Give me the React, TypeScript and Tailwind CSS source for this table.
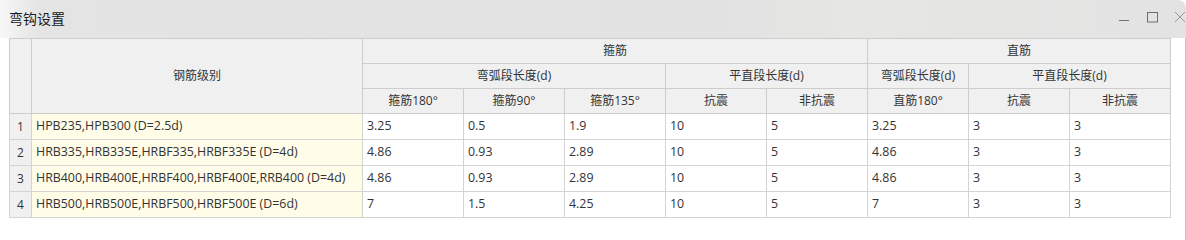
import React from 'react'

interface Row {
  grade: string
  values: string[]
}

const rows: Row[] = [
  { grade: 'HPB235,HPB300 (D=2.5d)', values: ['3.25', '0.5', '1.9', '10', '5', '3.25', '3', '3'] },
  { grade: 'HRB335,HRB335E,HRBF335,HRBF335E (D=4d)', values: ['4.86', '0.93', '2.89', '10', '5', '4.86', '3', '3'] },
  { grade: 'HRB400,HRB400E,HRBF400,HRBF400E,RRB400 (D=4d)', values: ['4.86', '0.93', '2.89', '10', '5', '4.86', '3', '3'] },
  { grade: 'HRB500,HRB500E,HRBF500,HRBF500E (D=6d)', values: ['7', '1.5', '4.25', '10', '5', '7', '3', '3'] },
]

const th = 'border border-[#cdcdcd] bg-[#f0f0f0] font-normal text-center p-0 h-[25px]'
const td = 'border border-[#d4d4d4] px-[4px] py-0 h-[26px] text-left text-[12.4px]'

export default function App() {
  return (
    <div
      className="w-[1186px] h-[240px] bg-white flex flex-col text-[#333] overflow-hidden"
      style={{ fontFamily: '"Open Sans", "Noto Sans CJK SC", sans-serif' }}
    >
      <div className="h-[38px] shrink-0 flex items-center justify-between bg-[linear-gradient(90deg,#f7f7f7_0px,#e4e4e4_40px,#e2e2e2_60%,#e6e6e4_72%,#e3e3e3_100%)] rounded-tr-[8px]">
        <span className="pl-[9px] text-[14px] text-[#1b1b1b] leading-none">弯钩设置</span>
        <div className="flex items-center h-full">
          <svg width="28" height="38" viewBox="0 0 28 38">
            <line x1="11" y1="20.5" x2="21" y2="20.5" stroke="#6f6f6f" strokeWidth="1" />
          </svg>
          <svg width="28" height="38" viewBox="0 0 28 38">
            <rect x="11.5" y="12.5" width="10" height="9.5" fill="none" stroke="#6f6f6f" strokeWidth="1" />
          </svg>
          <svg width="22" height="38" viewBox="0 0 22 38">
            <path d="M11 12 L21 22 M21 12 L11 22" stroke="#9a9a9a" strokeWidth="1" />
          </svg>
        </div>
      </div>
      <div className="flex-1 flex border-r border-[#c4c4c4]">
        <div className="pl-[9px]">
          <table className="table-fixed border-collapse text-[12px] w-[1161px]">
            <colgroup>
              <col className="w-[22px]" />
              <col className="w-[331px]" />
              {Array.from({ length: 8 }).map((_, i) => (
                <col key={i} className="w-[101px]" />
              ))}
            </colgroup>
            <thead>
              <tr>
                <th className={th} rowSpan={3}></th>
                <th className={th} rowSpan={3}>钢筋级别</th>
                <th className={th} colSpan={5}>箍筋</th>
                <th className={th} colSpan={3}>直筋</th>
              </tr>
              <tr>
                <th className={th} colSpan={3}>弯弧段长度(d)</th>
                <th className={th} colSpan={2}>平直段长度(d)</th>
                <th className={th}>弯弧段长度(d)</th>
                <th className={th} colSpan={2}>平直段长度(d)</th>
              </tr>
              <tr>
                <th className={th}>箍筋180°</th>
                <th className={th}>箍筋90°</th>
                <th className={th}>箍筋135°</th>
                <th className={th}>抗震</th>
                <th className={th}>非抗震</th>
                <th className={th}>直筋180°</th>
                <th className={th}>抗震</th>
                <th className={th}>非抗震</th>
              </tr>
            </thead>
            <tbody>
              {rows.map((row, i) => (
                <tr key={i}>
                  <td className="border border-[#d4d4d4] bg-[#f0f0f0] text-center h-[26px] p-0">{i + 1}</td>
                  <td className={`${td} bg-[#fffce8]`}>{row.grade}</td>
                  {row.values.map((v, j) => (
                    <td key={j} className={td}>{v}</td>
                  ))}
                </tr>
              ))}
            </tbody>
          </table>
        </div>
      </div>
    </div>
  )
}
